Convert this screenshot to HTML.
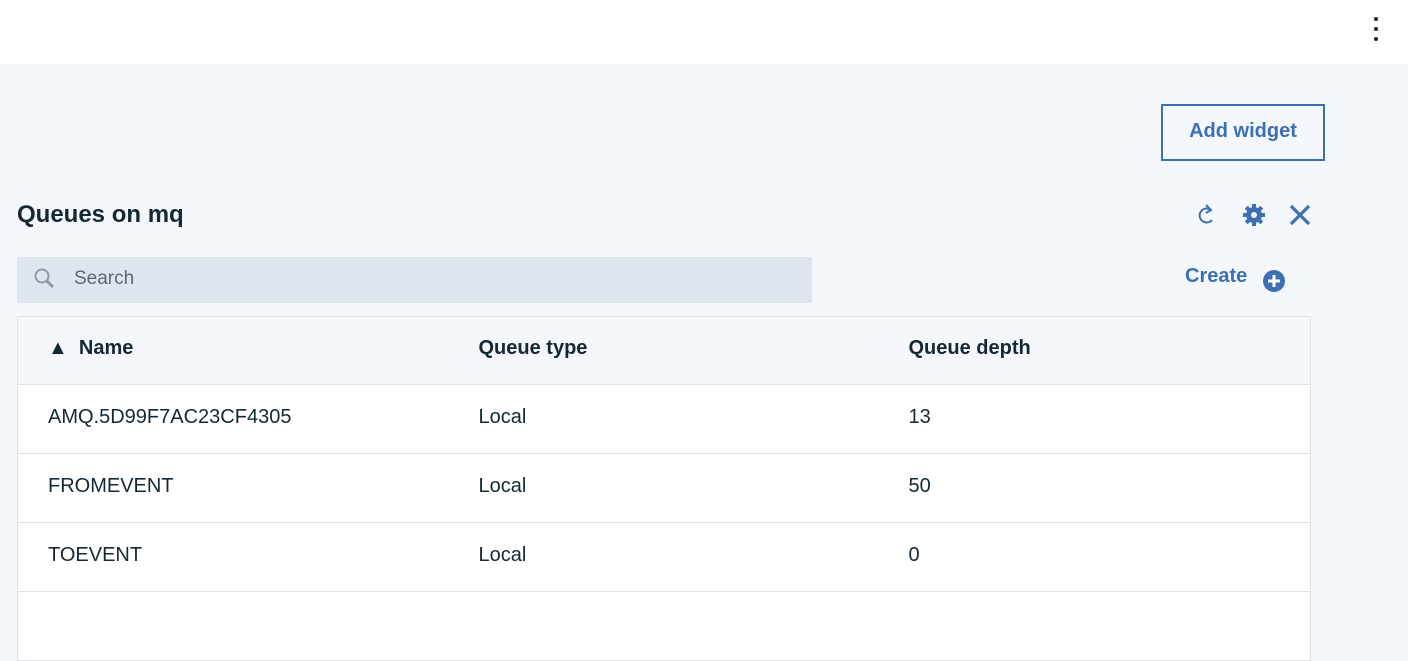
<!DOCTYPE html>
<html><head><style>
*{margin:0;padding:0;box-sizing:border-box}
body{width:1408px;height:608px;overflow:hidden;background:#f4f7fb;font-family:"Liberation Sans",sans-serif;color:#152935;position:relative}
.top{position:absolute;left:0;top:0;width:1408px;height:64px;background:#fff}
.dots{position:absolute;left:1374px;top:17px;width:5px}
.dots i{display:block;width:4px;height:4px;background:#152935;border-radius:50%;margin-bottom:6px}
.btn{position:absolute;left:1161px;top:104px;width:164px;height:57px;border:2px solid #3d70b2;color:#3d70b2;font-weight:bold;font-size:20px;text-align:center;line-height:50px}
h2{position:absolute;left:17px;top:201px;font-size:24px;font-weight:bold}
.search{position:absolute;left:17px;top:257px;width:795px;height:46px;background:#dfe6ef;color:#5a6872;font-size:19px;line-height:44px;padding-left:57px}
.create{position:absolute;left:1185px;top:265px;color:#3d70b2;font-weight:bold;font-size:20px}
table{position:absolute;left:17px;top:316px;width:1294px;border-collapse:collapse;font-size:20px;border-left:1px solid #dfe3e6;border-right:1px solid #dfe3e6}
td,th{height:69px;border:1px solid #dfe3e6;border-left:none;border-right:none;text-align:left;padding-left:30px;padding-bottom:4px;font-weight:normal}
th{background:#f4f7fb;font-weight:bold;height:68px}
td{background:#fff}
</style></head><body>
<div class="top"><div class="dots"><i></i><i></i><i></i></div></div>
<div class="btn">Add widget</div>
<h2>Queues on mq</h2>
<svg style="position:absolute;left:1196px;top:203px" width="22" height="24" viewBox="0 0 22 24"><path d="M15 7 A7 7 0 1 0 16 17" fill="none" stroke="#3d70b2" stroke-width="2"/><path d="M10 2 L15 7 L10 10" fill="none" stroke="#3d70b2" stroke-width="2"/></svg>
<svg style="position:absolute;left:1242px;top:203px" width="24" height="24" viewBox="0 0 24 24"><g fill="#3d70b2"><circle cx="12" cy="12" r="8"/><rect x="10" y="1" width="4" height="22"/><rect x="1" y="10" width="22" height="4"/><rect x="10" y="1" width="4" height="22" transform="rotate(45 12 12)"/><rect x="10" y="1" width="4" height="22" transform="rotate(-45 12 12)"/></g><circle cx="12" cy="12" r="3" fill="#f4f7fb"/></svg>
<svg style="position:absolute;left:1288px;top:203px" width="24" height="24" viewBox="0 0 24 24"><path d="M3 3L21 21M21 3L3 21" stroke="#3d70b2" stroke-width="3.2"/></svg>
<div class="search">Search</div>
<svg style="position:absolute;left:33px;top:267px" width="24" height="24" viewBox="0 0 24 24"><circle cx="9" cy="9" r="6.5" fill="none" stroke="#8c9ba5" stroke-width="2"/><path d="M14 14L20 20" stroke="#8c9ba5" stroke-width="3"/></svg>
<div class="create">Create</div>
<svg style="position:absolute;left:1262px;top:269px" width="24" height="24" viewBox="0 0 24 24"><circle cx="12" cy="12" r="11" fill="#3d70b2"/><path d="M12 6V18M6 12H18" stroke="#fff" stroke-width="3"/></svg>
<table>
<tr><th style="width:431px">▲&nbsp; Name</th><th style="width:430px">Queue type</th><th>Queue depth</th></tr>
<tr><td>AMQ.5D99F7AC23CF4305</td><td>Local</td><td>13</td></tr>
<tr><td>FROMEVENT</td><td>Local</td><td>50</td></tr>
<tr><td>TOEVENT</td><td>Local</td><td>0</td></tr>
<tr><td></td><td></td><td></td></tr>
</table>
</body></html>
